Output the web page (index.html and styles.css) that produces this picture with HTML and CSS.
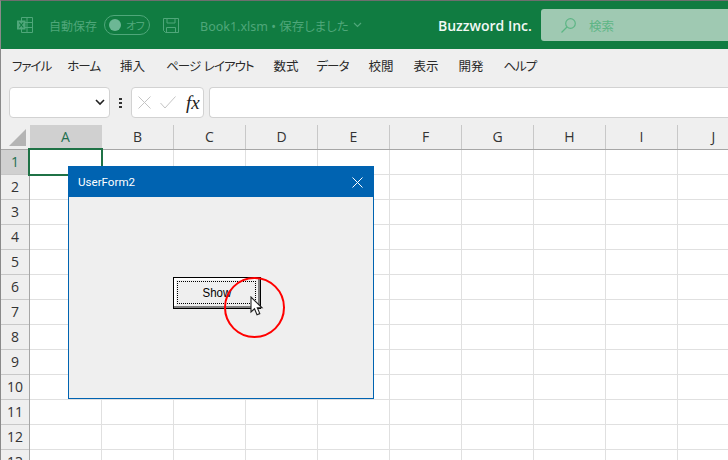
FILE: index.html
```html
<!DOCTYPE html>
<html lang="ja">
<head>
<meta charset="utf-8">
<title>Book1.xlsm</title>
<link rel="stylesheet" href="styles.css">
</head>
<body>
<div class="app">
  <header class="titlebar">
    <svg class="xl-icon" width="16" height="16" viewBox="0 0 16 16" fill="none" stroke="#4FA77A" stroke-width="1"><path d="M4.500.500h11v15h-11zM4.500 5.500h11M4.500 10.500h11M10 .500v15"/><rect x="0" y="3.500" width="8.500" height="9" fill="#4FA77A" stroke="none"/><path d="M2.300 5.500l4 5M6.300 5.500l-4 5" stroke="#107C41" stroke-width="1.200"/></svg>
    <span class="autosave">自動保存</span>
    <span class="toggle"><span class="knob"></span><span class="toggle-label">オフ</span></span>
    <svg class="save-icon" width="16" height="15" viewBox="0 0 16 15" fill="none" stroke="#4FA77A" stroke-width="1"><path d="M.5.500h15v14H2.500l-2-2zM4 .500v4.500h8V.500M3.500 14.500v-5h9v5"/></svg>
    <span class="docname">Book1.xlsm • 保存しました</span>
    <svg class="doc-chevron" width="9" height="6" viewBox="0 0 9 6" fill="none" stroke="#4FA77A" stroke-width="1.200"><path d="M1 1l3.500 3.500L8 1"/></svg>
    <span class="company">Buzzword Inc.</span>
    <div class="search">
      <svg width="15" height="15" viewBox="0 0 15 15" fill="none" stroke="#5DB585" stroke-width="1.200"><circle cx="9.500" cy="5.500" r="4.800"/><path d="M6 9L.5 14.500"/></svg>
      <span>検索</span>
    </div>
  </header>

  <nav class="menu">
    <span class="kana first">ファイル</span><span class="kana">ホーム</span><span>挿入</span><span class="kana layout">ページ レイアウト</span><span class="formulas">数式</span><span class="kana">データ</span><span>校閲</span><span>表示</span><span>開発</span><span class="kana">ヘルプ</span>
  </nav>

  <div class="formula-row">
    <div class="box namebox">
      <svg width="10" height="7" viewBox="0 0 10 7" fill="none" stroke="#222" stroke-width="1.600"><path d="M1 1l4 4 4-4"/></svg>
    </div>
    <div class="grip"><i></i><i></i><i></i></div>
    <div class="box fx-buttons">
      <svg width="13" height="13" viewBox="0 0 13 13" fill="none" stroke="#C4C4C4" stroke-width="1"><path d="M.5.500l12 12M12.500.500l-12 12"/></svg>
      <svg width="16" height="13" viewBox="0 0 16 13" fill="none" stroke="#C4C4C4" stroke-width="1"><path d="M.5 7l4.500 5L15.500.500"/></svg>
      <span class="fx">fx</span>
    </div>
    <div class="box formula-input"></div>
  </div>

  <div class="sheet">
    <div class="col-headers">
      <div class="corner"><span class="corner-tri"></span></div>
      <div class="col active">A</div><div class="col">B</div><div class="col">C</div><div class="col">D</div><div class="col">E</div><div class="col">F</div><div class="col">G</div><div class="col">H</div><div class="col">I</div><div class="col">J</div>
    </div>
    <div class="sheet-body">
      <div class="row-headers">
        <div class="row active">1</div><div class="row">2</div><div class="row">3</div><div class="row">4</div><div class="row">5</div><div class="row">6</div><div class="row">7</div><div class="row">8</div><div class="row">9</div><div class="row">10</div><div class="row">11</div><div class="row">12</div><div class="row">13</div>
      </div>
      <div class="cells"><div class="selected"></div></div>
    </div>
  </div>

  <section class="dialog">
    <div class="dialog-title">
      <span>UserForm2</span>
      <svg width="11" height="11" viewBox="0 0 11 11" fill="none" stroke="#fff" stroke-width="1"><path d="M.5.500l10 10M10.500.500l-10 10"/></svg>
    </div>
    <div class="dialog-body">
      <div class="button"><div class="button-focus"><span class="button-text">Show</span></div></div>
    </div>
  </section>

  <div class="click-ring"></div>
  <svg class="cursor" width="14" height="21" viewBox="0 0 14 21"><path d="M1 1v15l3.500-3.200 2.500 6 2.800-1.200-2.500-5.800H12z" fill="#fff" stroke="#222" stroke-width="1.100"/></svg>
</div>
</body>
</html>
```
FILE: styles.css
```css
* { box-sizing: border-box; }
html, body { margin: 0; padding: 0; }
body { font-family: "Open Sans", "Noto Sans CJK JP", sans-serif; }
.app {
  position: relative;
  width: 728px;
  height: 460px;
  overflow: hidden;
  background: #EFEFEF;
  border-top: 1px solid #6E6E6E;
  border-left: 1px solid #8A8A8A;
  display: flex;
  flex-direction: column;
}
.titlebar {
  height: 48px;
  flex: none;
  background: #107C41;
  display: flex;
  align-items: center;
  color: #4FA77A;
  font-size: 13px;
  padding-left: 16px;
  overflow: hidden;
  font-feature-settings: "palt";
}
.titlebar > * { flex: none; }
.xl-icon { margin-right: 16px; }
.autosave { font-family: "Noto Sans CJK JP", sans-serif; font-size: 12px; width: 55px; white-space: nowrap; }
.toggle {
  width: 46px;
  height: 20px;
  border: 1px solid #4FA77A;
  border-radius: 10px;
  display: flex;
  align-items: center;
  padding-left: 4px;
  margin-right: 13px;
}
.knob { width: 12px; height: 12px; border-radius: 50%; background: #6CB795; flex: none; }
.toggle-label { font-family: "Noto Sans CJK JP", sans-serif; font-size: 11px; letter-spacing: -.5px; margin-left: 5px; white-space: nowrap; }
.save-icon { margin-right: 21px; }
.docname { font-family: "Noto Sans", "Noto Sans CJK JP", sans-serif; font-size: 12.500px; width: 153px; white-space: nowrap; }
.company {
  margin-left: 76px;
  color: #F2F8F4;
  font-weight: 600;
  font-size: 14px;
  width: 103px;
  white-space: nowrap;
}
.search {
  width: 230px;
  height: 32px;
  background: #9FC9B2;
  border-radius: 3px;
  display: flex;
  align-items: center;
  padding-left: 20px;
  color: #5DB585;
  font-family: "Noto Sans CJK JP", sans-serif;
  font-size: 12.500px;
  gap: 13px;
}
.menu {
  height: 38px;
  flex: none;
  display: flex;
  align-items: center;
  gap: 20px;
  padding: 0 0 6px 11px;
  font-family: "Noto Sans CJK JP", sans-serif;
  font-size: 12.500px;
  font-feature-settings: "palt";
  color: #2A2A2A;
  white-space: nowrap;
}
.kana { letter-spacing: -1px; }
.first { margin-right: -4px; }
.layout { margin-left: 1px; word-spacing: 2px; }
.formulas { margin-right: -2px; }
.formula-row {
  height: 38px;
  flex: none;
  display: flex;
  align-items: flex-start;
}
.box {
  height: 31px;
  flex: none;
  background: #fff;
  border: 1px solid #D2D2D2;
  border-radius: 4px;
  display: flex;
  align-items: center;
}
.namebox { width: 101px; margin-left: 8px; justify-content: flex-end; padding-right: 4px; }
.grip { width: 21px; height: 31px; flex: none; display: flex; flex-direction: column; align-items: center; justify-content: center; gap: 2px; }
.grip i { width: 3px; height: 2px; background: #333; }
.fx-buttons { width: 73px; padding-left: 6px; gap: 9px; }
.fx { font-family: "Liberation Serif", serif; font-style: italic; font-weight: 400; font-size: 19px; color: #222; margin-left: 1px; }
.formula-input { width: 530px; margin-left: 5px; border-right: 0; border-radius: 4px 0 0 4px; }
.sheet { flex: 1; background: #fff; display: flex; flex-direction: column; min-height: 0; }
.col-headers { display: flex; height: 25px; flex: none; background: #EFEFEF; border-bottom: 1px solid #A6A6A6; }
.corner { width: 29px; flex: none; position: relative; border-right: 1px solid #EFEFEF; }
.corner-tri {
  position: absolute;
  right: 3px;
  bottom: 3px;
  width: 0;
  height: 0;
  border-left: 17px solid transparent;
  border-bottom: 17px solid #B4B4B4;
}
.col {
  width: 72px;
  flex: none;
  text-align: center;
  font-size: 14px;
  line-height: 24px;
  color: #333;
  border-right: 1px solid #C8C8C8;
}
.col.active { background: #D0D0D0; color: #1F6F4F; border-right-color: #D0D0D0; }
.sheet-body { display: flex; flex: 1; min-height: 0; }
.row-headers { width: 29px; flex: none; background: #EFEFEF; border-right: 1px solid #A6A6A6; overflow: hidden; }
.row {
  height: 25px;
  text-align: center;
  font-size: 14px;
  line-height: 24px;
  color: #333;
  border-bottom: 1px solid #C8C8C8;
}
.row.active { background: #D0D0D0; color: #1F6F4F; }
.cells {
  flex: 1;
  position: relative;
  background-color: #fff;
  background-image:
    repeating-linear-gradient(to right, transparent 0 71px, #E0E0E0 71px 72px),
    repeating-linear-gradient(to bottom, transparent 0 24px, #E0E0E0 24px 25px);
}
.selected {
  position: absolute;
  left: -2px;
  top: -2px;
  width: 75px;
  height: 28px;
  border: 2px solid #1F7246;
}
.dialog {
  position: absolute;
  left: 67px;
  top: 165px;
  width: 306px;
  height: 233px;
  border: 1px solid #0063B1;
  background: #EFEFEF;
  display: flex;
  flex-direction: column;
}
.dialog-title {
  height: 30px;
  flex: none;
  background: #0063B1;
  color: #fff;
  font-family: Roboto, sans-serif;
  font-size: 11.600px;
  display: flex;
  align-items: center;
  justify-content: space-between;
  padding: 0 10px 0 9px;
}
.dialog-body { flex: 1; padding: 80px 0 0 104px; }
.button {
  width: 88px;
  height: 32px;
  background: #EFEFEF;
  border: 1px solid #000;
  box-shadow: inset -2px -2px 0 #808080, inset 2px 2px 0 #fff;
  padding: 3px 4px 4px 3px;
}
.button-focus {
  height: 100%;
  border: 1px dotted #000;
  font-family: "Liberation Sans", sans-serif;
  font-size: 13.500px;
  color: #000;
  text-align: center;
  line-height: 22px;
}
.button-text { display: inline-block; transform: scaleX(.85); }
.click-ring {
  position: absolute;
  left: 223px;
  top: 276px;
  width: 61px;
  height: 61px;
  border: 2px solid #F00;
  border-radius: 50%;
}
.cursor { position: absolute; left: 249px; top: 295px; }
```
